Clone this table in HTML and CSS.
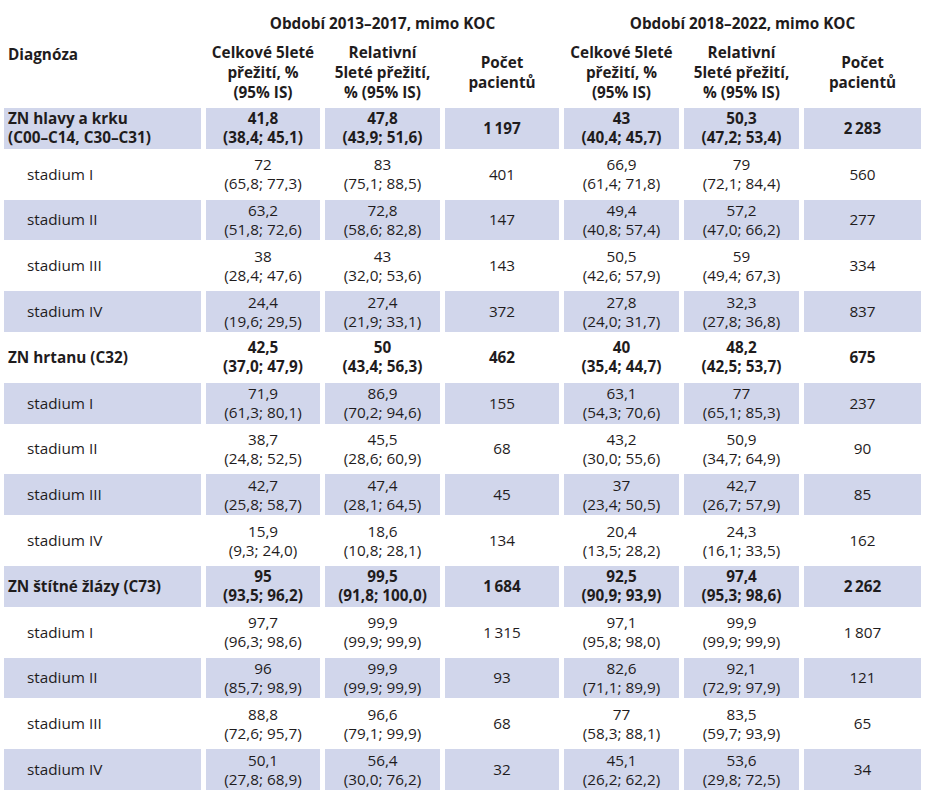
FILE: index.html
```html
<!DOCTYPE html>
<html lang="cs">
<head>
    <meta charset="UTF-8">
    <meta name="viewport" content="width=device-width, initial-scale=1.0">
    <title>Přežití pacientů</title>
    <link rel="stylesheet" href="styles.css">
</head>
<body>
    <table class="survival">
        <colgroup>
            <col class="c-diag">
            <col class="c-a">
            <col class="c-b">
            <col class="c-a">
            <col class="c-b">
            <col class="c-b">
            <col class="c-c">
        </colgroup>
        <thead>
            <tr class="period">
                <th rowspan="2" class="diag-head">Diagnóza</th>
                <th colspan="3">Období 2013–2017, mimo KOC</th>
                <th colspan="3">Období 2018–2022, mimo KOC</th>
            </tr>
            <tr class="cols">
                <th>Celkové 5leté<br>přežití, %<br>(95% IS)</th>
                <th>Relativní<br>5leté přežití,<br>% (95% IS)</th>
                <th>Počet<br>pacientů</th>
                <th>Celkové 5leté<br>přežití, %<br>(95% IS)</th>
                <th>Relativní<br>5leté přežití,<br>% (95% IS)</th>
                <th>Počet<br>pacientů</th>
            </tr>
        </thead>
        <tbody>
            <tr class="group">
                <td>ZN hlavy a krku<br>(C00–C14, C30–C31)</td>
                <td>41,8<br>(38,4; 45,1)</td>
                <td>47,8<br>(43,9; 51,6)</td>
                <td>1&#8201;197</td>
                <td>43<br>(40,4; 45,7)</td>
                <td>50,3<br>(47,2; 53,4)</td>
                <td>2&#8201;283</td>
            </tr>
            <tr>
                <td>stadium I</td>
                <td>72<br>(65,8; 77,3)</td>
                <td>83<br>(75,1; 88,5)</td>
                <td>401</td>
                <td>66,9<br>(61,4; 71,8)</td>
                <td>79<br>(72,1; 84,4)</td>
                <td>560</td>
            </tr>
            <tr>
                <td>stadium II</td>
                <td>63,2<br>(51,8; 72,6)</td>
                <td>72,8<br>(58,6; 82,8)</td>
                <td>147</td>
                <td>49,4<br>(40,8; 57,4)</td>
                <td>57,2<br>(47,0; 66,2)</td>
                <td>277</td>
            </tr>
            <tr>
                <td>stadium III</td>
                <td>38<br>(28,4; 47,6)</td>
                <td>43<br>(32,0; 53,6)</td>
                <td>143</td>
                <td>50,5<br>(42,6; 57,9)</td>
                <td>59<br>(49,4; 67,3)</td>
                <td>334</td>
            </tr>
            <tr>
                <td>stadium IV</td>
                <td>24,4<br>(19,6; 29,5)</td>
                <td>27,4<br>(21,9; 33,1)</td>
                <td>372</td>
                <td>27,8<br>(24,0; 31,7)</td>
                <td>32,3<br>(27,8; 36,8)</td>
                <td>837</td>
            </tr>
            <tr class="group">
                <td>ZN hrtanu (C32)</td>
                <td>42,5<br>(37,0; 47,9)</td>
                <td>50<br>(43,4; 56,3)</td>
                <td>462</td>
                <td>40<br>(35,4; 44,7)</td>
                <td>48,2<br>(42,5; 53,7)</td>
                <td>675</td>
            </tr>
            <tr>
                <td>stadium I</td>
                <td>71,9<br>(61,3; 80,1)</td>
                <td>86,9<br>(70,2; 94,6)</td>
                <td>155</td>
                <td>63,1<br>(54,3; 70,6)</td>
                <td>77<br>(65,1; 85,3)</td>
                <td>237</td>
            </tr>
            <tr>
                <td>stadium II</td>
                <td>38,7<br>(24,8; 52,5)</td>
                <td>45,5<br>(28,6; 60,9)</td>
                <td>68</td>
                <td>43,2<br>(30,0; 55,6)</td>
                <td>50,9<br>(34,7; 64,9)</td>
                <td>90</td>
            </tr>
            <tr>
                <td>stadium III</td>
                <td>42,7<br>(25,8; 58,7)</td>
                <td>47,4<br>(28,1; 64,5)</td>
                <td>45</td>
                <td>37<br>(23,4; 50,5)</td>
                <td>42,7<br>(26,7; 57,9)</td>
                <td>85</td>
            </tr>
            <tr>
                <td>stadium IV</td>
                <td>15,9<br>(9,3; 24,0)</td>
                <td>18,6<br>(10,8; 28,1)</td>
                <td>134</td>
                <td>20,4<br>(13,5; 28,2)</td>
                <td>24,3<br>(16,1; 33,5)</td>
                <td>162</td>
            </tr>
            <tr class="group">
                <td>ZN štítné žlázy (C73)</td>
                <td>95<br>(93,5; 96,2)</td>
                <td>99,5<br>(91,8; 100,0)</td>
                <td>1&#8201;684</td>
                <td>92,5<br>(90,9; 93,9)</td>
                <td>97,4<br>(95,3; 98,6)</td>
                <td>2&#8201;262</td>
            </tr>
            <tr>
                <td>stadium I</td>
                <td>97,7<br>(96,3; 98,6)</td>
                <td>99,9<br>(99,9; 99,9)</td>
                <td>1&#8201;315</td>
                <td>97,1<br>(95,8; 98,0)</td>
                <td>99,9<br>(99,9; 99,9)</td>
                <td>1&#8201;807</td>
            </tr>
            <tr>
                <td>stadium II</td>
                <td>96<br>(85,7; 98,9)</td>
                <td>99,9<br>(99,9; 99,9)</td>
                <td>93</td>
                <td>82,6<br>(71,1; 89,9)</td>
                <td>92,1<br>(72,9; 97,9)</td>
                <td>121</td>
            </tr>
            <tr>
                <td>stadium III</td>
                <td>88,8<br>(72,6; 95,7)</td>
                <td>96,6<br>(79,1; 99,9)</td>
                <td>68</td>
                <td>77<br>(58,3; 88,1)</td>
                <td>83,5<br>(59,7; 93,9)</td>
                <td>65</td>
            </tr>
            <tr>
                <td>stadium IV</td>
                <td>50,1<br>(27,8; 68,9)</td>
                <td>56,4<br>(30,0; 76,2)</td>
                <td>32</td>
                <td>45,1<br>(26,2; 62,2)</td>
                <td>53,6<br>(29,8; 72,5)</td>
                <td>34</td>
            </tr>
        </tbody>
    </table>
</body>
</html>
```

FILE: styles.css
```css
body {
    margin: 0;
    padding: 0;
    background: #fff;
    color: #1f1c1d;
    font-family: "Open Sans", "Noto Sans", sans-serif;
    font-size: 15.3px;
}

.survival {
    margin-left: -1px;
    table-layout: fixed;
    width: 927px;
    border-collapse: separate;
    border-spacing: 5px 5px;
}

.c-diag { width: 197px; }
.c-a { width: 114px; }
.c-b { width: 115px; }
.c-c { width: 117px; }

.survival th {
    font-weight: 700;
    text-align: center;
    vertical-align: middle;
    line-height: 20px;
    padding: 0;
}

.period th {
    height: 19px;
    line-height: 19px;
    padding-top: 9px;
}

.survival th.diag-head {
    text-align: left;
    padding-left: 4px;
    padding-top: 0;
}

.cols th {
    height: 62px;
    padding: 3px 0 0;
}

.survival td {
    height: 40.8px;
    padding: 0;
    line-height: 19px;
    text-align: center;
    vertical-align: middle;
}

.survival td:first-child {
    text-align: left;
    padding-left: 23px;
}

.survival tbody tr:nth-child(odd) td {
    background: #d1d6eb;
}

.survival tr.group td {
    font-weight: 700;
}

.survival tr.group td:first-child {
    padding-left: 4px;
}
```
